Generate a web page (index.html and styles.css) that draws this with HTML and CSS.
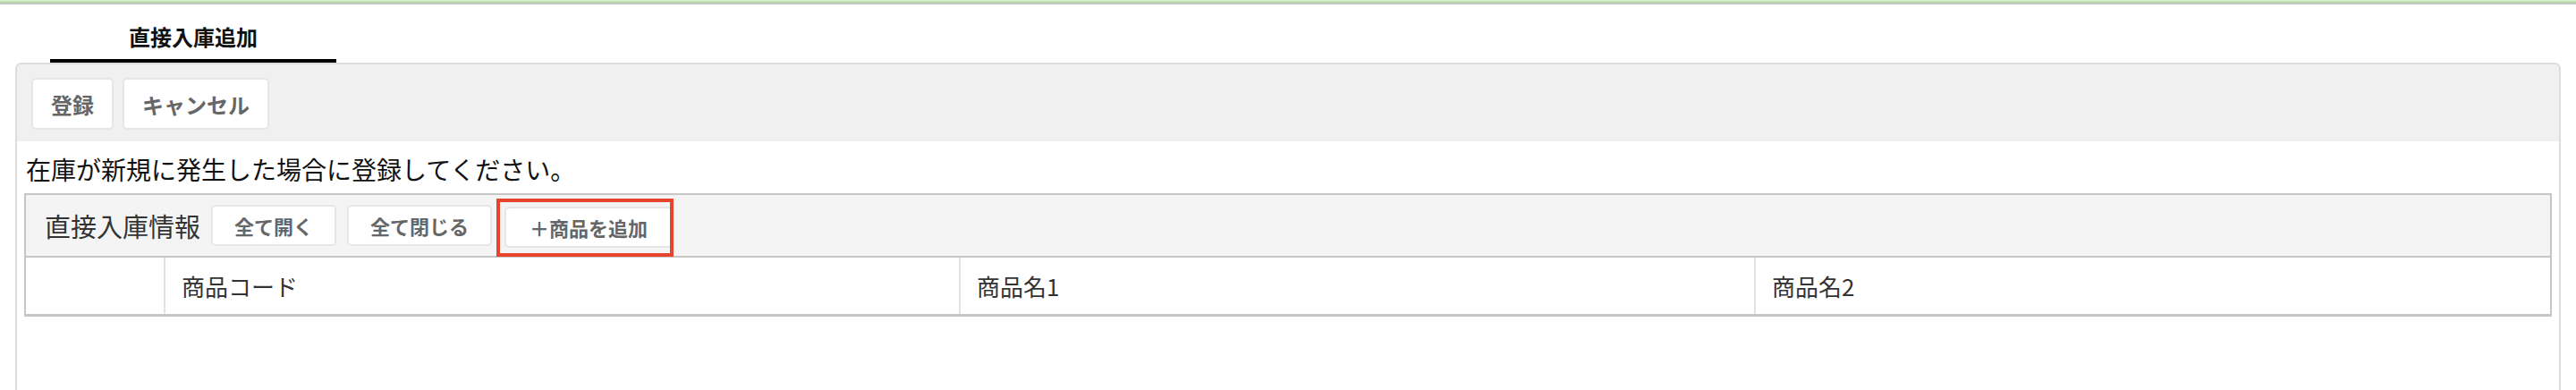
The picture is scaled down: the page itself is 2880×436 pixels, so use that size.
FILE: index.html
```html
<!DOCTYPE html>
<html lang="ja">
<head>
  <meta charset="UTF-8">
  <title>直接入庫追加</title>
  <meta name="viewport" content="width=device-width, initial-scale=1.0">
  <link rel="stylesheet" href="styles.css">
</head>
<body>
  <div class="topline"></div>

  <div class="tabs">
    <a class="tab active" href="#add">直接入庫追加</a>
  </div>

  <div class="panel">
    <div class="toolbar">
      <button class="btn btn-big">登録</button>
      <button class="btn btn-big">キャンセル</button>
    </div>

    <div class="panel-body">
      <p class="note">在庫が新規に発生した場合に登録してください。</p>

      <div class="section">
        <div class="section-head">
          <h3>直接入庫情報</h3>
          <button class="btn">全て開く</button>
          <button class="btn">全て閉じる</button>
          <span class="highlight">
            <button class="btn">＋商品を追加</button>
          </span>
        </div>
        <table class="items">
          <thead>
            <tr>
              <th class="col-no"></th>
              <th>商品コード</th>
              <th>商品名1</th>
              <th>商品名2</th>
            </tr>
          </thead>
        </table>
      </div>
    </div>
  </div>
</body>
</html>
```

FILE: styles.css
```css
* {
  box-sizing: border-box;
  margin: 0;
  padding: 0;
}

body {
  font-family: "Noto Sans CJK JP", "Noto Sans", sans-serif;
  background: #fff;
  color: #333;
  height: 100vh;
  overflow: hidden;
}

.topline {
  height: 5px;
  background: linear-gradient(to bottom, #e4f3dc 0, #a9d698 60%, #c8c8c8 60%, #c8c8c8 100%);
}

.tabs {
  display: flex;
  padding: 21px 0 0 56px;
}

.tab {
  display: block;
  width: 320px;
  text-align: center;
  font-size: 24px;
  font-weight: bold;
  line-height: 30px;
  color: #111;
  text-decoration: none;
  padding-bottom: 10px;
  border-bottom: 4px solid #000;
}

.panel {
  margin: 0 17px 0 17px;
  border: 2px solid #dcdcdc;
  border-bottom: none;
  border-radius: 7px 7px 0 0;
  height: 420px;
  background: #fff;
}

.toolbar {
  display: flex;
  gap: 10px;
  background: #f0f0f0;
  padding: 15px 16px 13px;
  border-radius: 6px 6px 0 0;
}

.btn {
  font-family: inherit;
  font-size: 22px;
  font-weight: bold;
  color: #666;
  background: #fff;
  border: 2px solid #e6e6e6;
  border-radius: 5px;
  height: 46px;
  padding: 0 24px;
  cursor: pointer;
}

.btn-big {
  font-size: 24px;
  height: 58px;
  padding: 0 20px;
}

.panel-body {
  padding: 14px 8px 0 8px;
}

.note {
  font-size: 28px;
  line-height: 34px;
  color: #111;
  padding-left: 2px;
  margin-bottom: 10px;
}

.section {
  border: 2px solid #c6c6c6;
  border-bottom-width: 3px;
}

.section-head {
  display: flex;
  align-items: center;
  gap: 12px;
  height: 70px;
  padding-left: 21px;
  background: #f4f4f4;
  border-bottom: 2px solid #c6c6c6;
}

.section-head h3 {
  font-size: 29px;
  font-weight: normal;
  color: #333;
}

.highlight {
  display: flex;
  align-items: center;
  height: 65px;
  margin: 4px 0 0 -7px;
  padding: 0 0 0 5px;
  border: 4px solid #e6452c;
  overflow: hidden;
  width: 198px;
}

.highlight .btn {
  padding: 0 26px;
  flex-shrink: 0;
}

.items {
  width: 100%;
  border-collapse: collapse;
  table-layout: fixed;
}

.items th {
  height: 63px;
  padding: 0 18px;
  text-align: left;
  font-size: 26px;
  font-weight: normal;
  color: #333;
  border-left: 2px solid #e2e2e2;
}

.items th.col-no {
  width: 155px;
  border-left: none;
}
```
